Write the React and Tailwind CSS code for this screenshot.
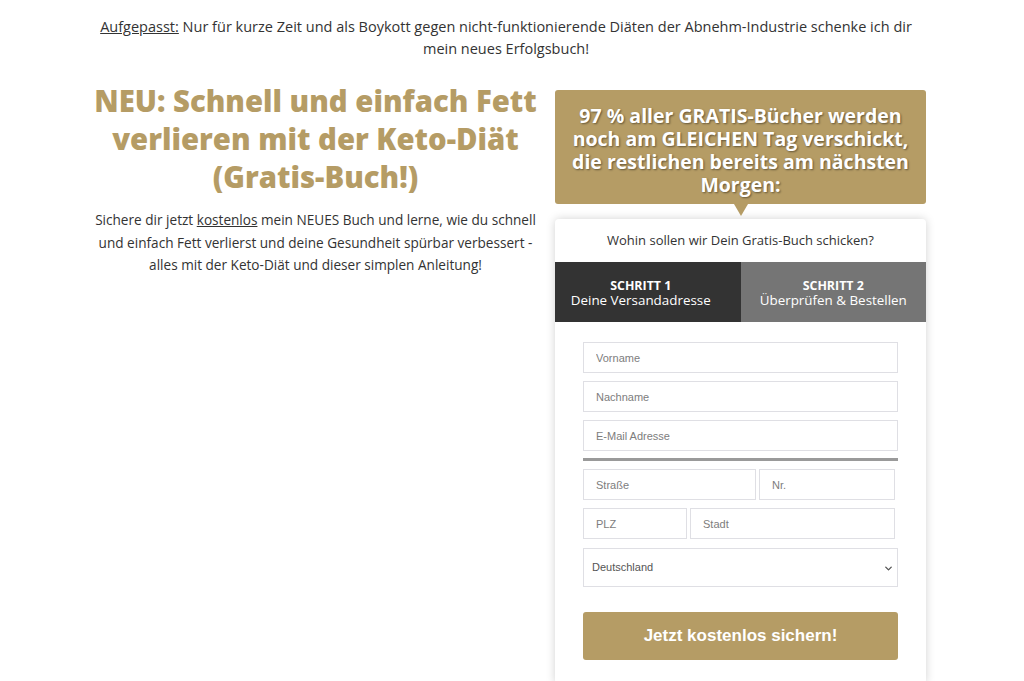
import { ChevronDown } from 'lucide-react';

const gold = 'bg-[#b59c65]';

const Field = ({ placeholder, className = '' }) => (
  <input
    type="text"
    placeholder={placeholder}
    className={`h-[31px] border border-[#dfdfe4] bg-white px-3 text-[11px] text-[#555] placeholder:text-[#7d7d7d] outline-none ${className}`}
    style={{ fontFamily: '"Liberation Sans", Arial, sans-serif' }}
  />
);

export default function App() {
  return (
    <div className="min-h-screen bg-white text-[#333]" style={{ fontFamily: '"Open Sans", sans-serif' }}>
      <p className="ml-[88px] w-[836px] pt-4 text-center text-[14.5px] leading-[22px]">
        <span className="underline">Aufgepasst:</span> Nur für kurze Zeit und als Boykott gegen nicht-funktionierende Diäten der
        Abnehm-Industrie schenke ich dir mein neues Erfolgsbuch!
      </p>

      <div className="ml-[90px] mt-[30px] flex w-[836px] items-start gap-[14px]">
        {/* left column */}
        <div className="w-[451px] text-center">
          <h1 className="-mt-[8px] text-[29.3px] font-extrabold leading-[38px] text-[#b59c65]">
            NEU: Schnell und einfach Fett verlieren mit der Keto-Diät (Gratis-Buch!)
          </h1>
          <p className="mt-[13px] text-[13.6px] leading-[22.5px]">
            Sichere dir jetzt <span className="underline">kostenlos</span> mein NEUES Buch und lerne, wie du schnell und
            einfach Fett verlierst und deine Gesundheit spürbar verbessert - alles mit der Keto-Diät und dieser simplen
            Anleitung!
          </p>
        </div>

        {/* right column */}
        <div className="w-[371px]">
          <div className={`relative rounded-[3px] ${gold} px-4 pb-[8px] pt-[14px] text-center`}>
            <p className="text-[19.5px] font-bold leading-[23px] text-white [text-shadow:1px_1px_2px_rgba(0,0,0,0.45)]">
              97 % aller GRATIS-Bücher werden noch am GLEICHEN Tag verschickt, die restlichen bereits am nächsten Morgen:
            </p>
            <div className="absolute left-[179px] top-full h-0 w-0 border-l-[7px] border-r-[7px] border-t-[12px] border-l-transparent border-r-transparent border-t-[#b59c65]" />
          </div>

          <div className="mt-[15px] overflow-hidden rounded-[4px] bg-white pb-6 shadow-[0_0_10px_rgba(0,0,0,0.18)]">
            <div className="flex h-[43px] items-center justify-center text-[13px]">Wohin sollen wir Dein Gratis-Buch schicken?</div>
            <div className="grid h-[60px] grid-cols-2 text-center text-white">
              <div className="flex flex-col items-center justify-center bg-[#333333] pr-[14px] pt-[2px] leading-[15px]">
                <span className="text-[12.4px] font-bold">SCHRITT 1</span>
                <span className="text-[13.4px]">Deine Versandadresse</span>
              </div>
              <div className="flex flex-col items-center justify-center bg-[#757575] pt-[2px] leading-[15px]">
                <span className="text-[12.4px] font-bold">SCHRITT 2</span>
                <span className="text-[13.4px]">Überprüfen &amp; Bestellen</span>
              </div>
            </div>

            <div className="flex flex-col px-[28px] pt-[20px]">
              <Field placeholder="Vorname" className="w-full" />
              <Field placeholder="Nachname" className="mt-2 w-full" />
              <Field placeholder="E-Mail Adresse" className="mt-2 w-full" />
              <div className="mt-[7px] h-[3px] w-full bg-[#9a9a9a]" />
              <div className="mt-[8px] flex gap-[3px]">
                <Field placeholder="Straße" className="w-[173px]" />
                <Field placeholder="Nr." className="w-[136px]" />
              </div>
              <div className="mt-2 flex gap-[3px]">
                <Field placeholder="PLZ" className="w-[104px]" />
                <Field placeholder="Stadt" className="w-[205px]" />
              </div>
              <div
                className="relative mt-[9px] flex h-[39px] items-center border border-[#dfdfe4] pl-[8px] text-[11px] text-[#555]"
                style={{ fontFamily: '"Liberation Sans", Arial, sans-serif' }}
              >
                Deutschland
                <ChevronDown size={11} strokeWidth={3} className="absolute right-[3px] top-[14px] text-[#555]" />
              </div>
              <button
                className={`mt-[25px] h-[48px] w-full rounded-[3px] ${gold} text-[17px] font-bold text-white`}
                style={{ fontFamily: '"Liberation Sans", Arial, sans-serif' }}
              >
                Jetzt kostenlos sichern!
              </button>
            </div>
          </div>
        </div>
      </div>
    </div>
  );
}
